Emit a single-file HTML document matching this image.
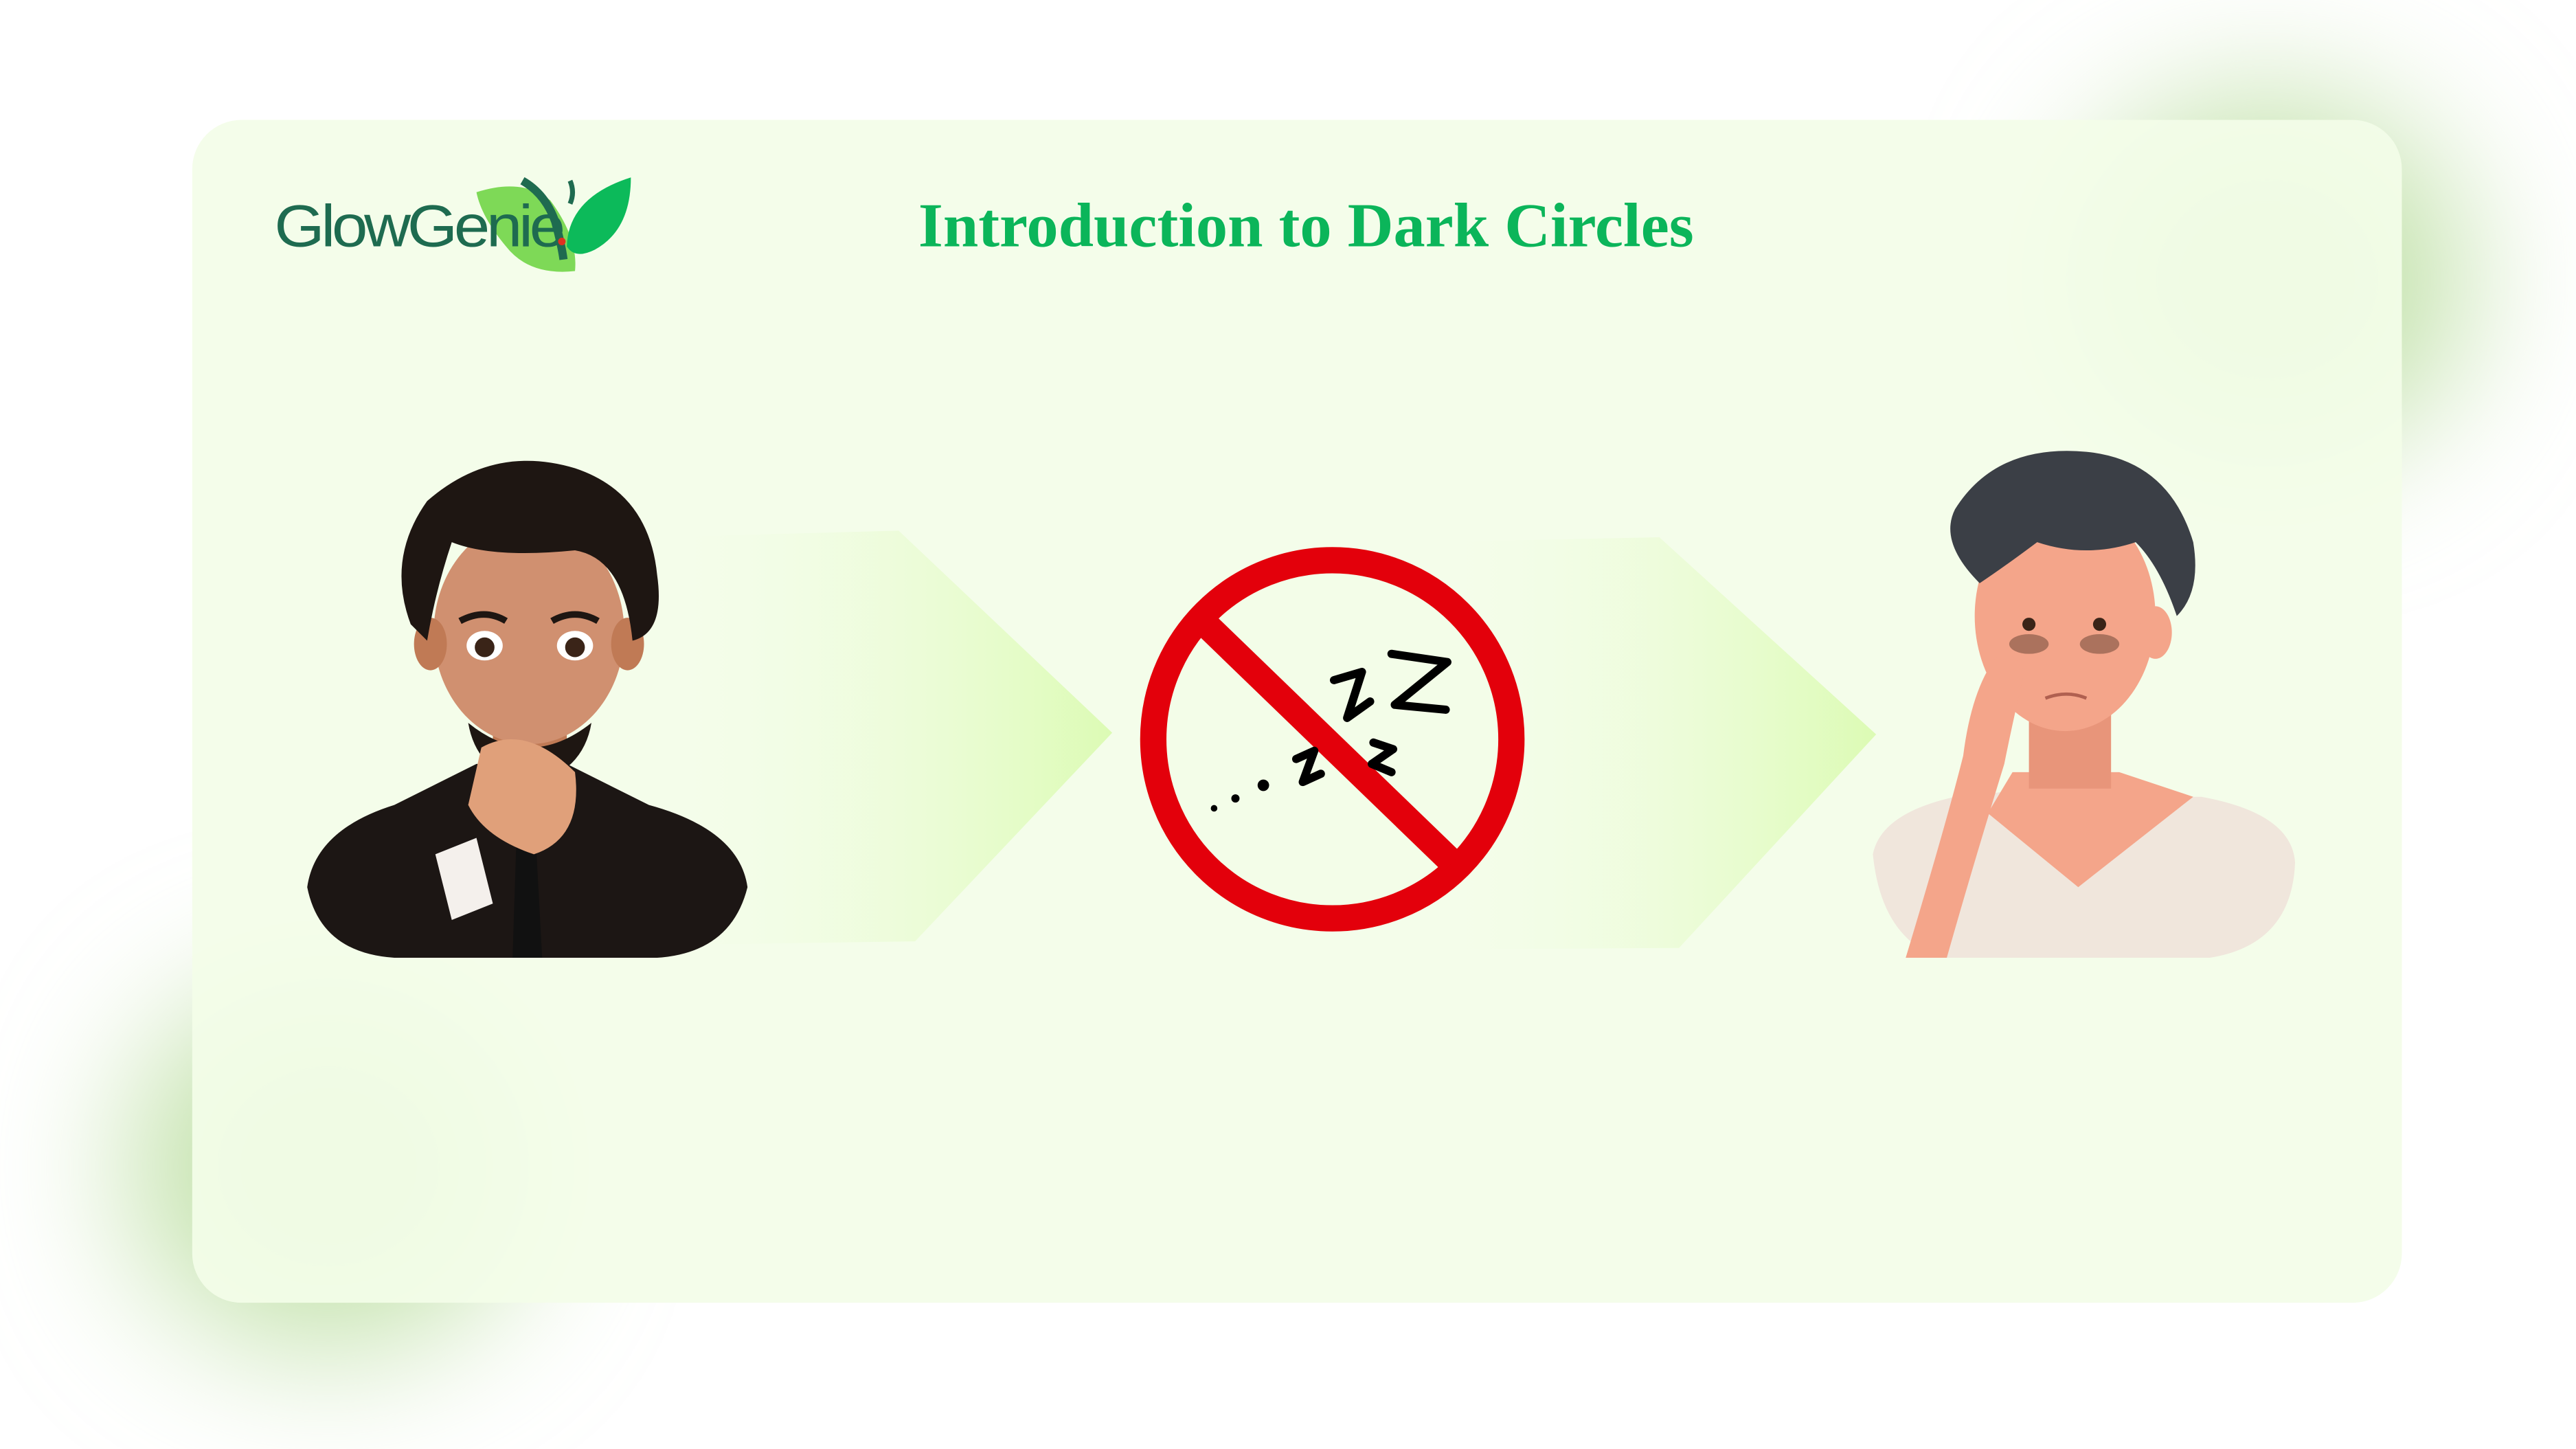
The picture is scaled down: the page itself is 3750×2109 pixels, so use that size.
<!DOCTYPE html>
<html><head><meta charset="utf-8"><style>
html,body{margin:0;padding:0;background:#fff;}
svg{display:block}
</style></head><body>
<svg width="3750" height="2109" viewBox="0 0 1568 882" preserveAspectRatio="none" xmlns="http://www.w3.org/2000/svg">
<defs>
<filter id="blur" x="-100%" y="-100%" width="300%" height="300%"><feGaussianBlur stdDeviation="45"/></filter>
<linearGradient id="ar" x1="0" x2="1" y1="0" y2="0">
<stop offset="0" stop-color="#f3fde8" stop-opacity="0"/>
<stop offset="1" stop-color="#dcfbb4"/>
</linearGradient>
</defs>
<rect width="1568" height="882" fill="#ffffff"/>
<ellipse cx="1380" cy="170" rx="120" ry="110" fill="#bfe0a6" filter="url(#blur)"/>
<ellipse cx="200" cy="710" rx="120" ry="110" fill="#bfe0a6" filter="url(#blur)"/>
<rect x="117" y="73" width="1345" height="720" rx="30" fill="#f3fde8" opacity="0.93"/>

<!-- logo -->
<path d="M290 117 Q318 108 335 122 Q352 145 350 165 Q322 168 308 150 Q293 132 290 117Z" fill="#7ed957"/>
<path d="M318 110 Q332 118 338 135 Q342 150 343 158" stroke="#1f6b50" stroke-width="5" fill="none"/>
<path d="M384 108 Q384 140 362 152 Q350 158 345 150 Q346 120 384 108Z" fill="#0cba5a"/>
<path d="M347 110 Q350 117 347 124" stroke="#1f6b50" stroke-width="3" fill="none"/>
<text x="167" y="150" font-family="Liberation Sans, sans-serif" font-size="36" fill="#1e6b50" textLength="175" lengthAdjust="spacingAndGlyphs" letter-spacing="-2">GlowGenie</text>
<circle cx="342" cy="147" r="2.3" fill="#e03020"/>

<text x="559" y="150" font-family="Liberation Serif, serif" font-weight="bold" font-size="38" fill="#0bb55a" textLength="472" lengthAdjust="spacingAndGlyphs">Introduction to Dark Circles</text>

<!-- arrows -->
<polygon points="400,327 547,323 677,446 557,573 420,575" fill="url(#ar)"/>
<polygon points="870,330 1010,327 1142,447 1022,577 880,578" fill="url(#ar)"/>

<!-- no sleep sign -->
<circle cx="811" cy="450" r="109" fill="#f3fde8" stroke="#e3000b" stroke-width="16"/>
<line x1="736" y1="382" x2="884" y2="525" stroke="#e3000b" stroke-width="16"/>
<g fill="none" stroke="#000" stroke-width="5" stroke-linecap="round" stroke-linejoin="round">
<path d="M847 398 L881 403 L849 429 L880 432"/>
<path d="M812 414 L829 409 L820 437 L834 427"/>
<path d="M789 462 L800 457 L793 476 L804 471"/>
<path d="M836 452 L848 456 L835 465 L847 470"/>
</g>
<circle cx="769" cy="478" r="3.5" fill="#000"/>
<circle cx="752" cy="486" r="2.5" fill="#000"/>
<circle cx="739" cy="492" r="2" fill="#000"/>

<!-- man 1 -->
<path d="M187 540 Q192 505 240 490 L290 465 L345 465 L395 490 Q450 505 455 540 Q445 580 400 583 L240 583 Q195 580 187 540Z" fill="#1c1614"/>
<path d="M292 470 L320 520 L350 470Z" fill="#f4f0ec"/>
<path d="M315 490 L325 490 L330 583 L312 583Z" fill="#111"/>
<rect x="300" y="420" width="45" height="55" fill="#c07a55"/>
<ellipse cx="322" cy="385" rx="58" ry="68" fill="#d09070"/>
<ellipse cx="262" cy="392" rx="10" ry="16" fill="#c07a55"/>
<ellipse cx="382" cy="392" rx="10" ry="16" fill="#c07a55"/>
<path d="M250 380 Q235 340 260 305 Q300 270 350 285 Q395 300 400 350 Q405 385 385 390 Q380 340 350 335 Q300 340 275 330 Q265 360 260 390Z" fill="#1e1612"/>
<path d="M285 440 Q322 470 360 440 Q355 470 322 478 Q290 470 285 440Z" fill="#1e1612"/>
<ellipse cx="295" cy="393" rx="11" ry="9" fill="#fff"/><circle cx="295" cy="394" r="6" fill="#3a2418"/>
<ellipse cx="350" cy="393" rx="11" ry="9" fill="#fff"/><circle cx="350" cy="394" r="6" fill="#3a2418"/>
<path d="M280 378 Q295 370 308 378 M336 378 Q350 370 364 378" stroke="#1e1612" stroke-width="4" fill="none"/>
<path d="M293 455 Q320 440 350 470 Q355 510 325 520 Q295 510 285 490Z" fill="#e0a07a"/>
<path d="M265 520 L290 510 L300 550 L275 560Z" fill="#f4f0ec"/>

<!-- man 2 -->
<path d="M1140 520 Q1145 495 1190 485 L1240 480 L1290 485 L1340 485 Q1395 495 1397 525 Q1395 575 1345 583 L1180 583 Q1145 570 1140 520Z" fill="#f0e6dc"/>
<path d="M1225 470 L1290 470 L1335 485 L1265 540 L1210 495Z" fill="#f4a58a"/>
<rect x="1235" y="420" width="50" height="60" fill="#e8957a"/>
<ellipse cx="1257" cy="375" rx="55" ry="70" fill="#f4a58a"/>
<ellipse cx="1312" cy="385" rx="10" ry="16" fill="#f4a58a"/>
<ellipse cx="1235" cy="392" rx="12" ry="6" fill="#7a5040" opacity="0.6"/>
<ellipse cx="1278" cy="392" rx="12" ry="6" fill="#7a5040" opacity="0.6"/>
<circle cx="1235" cy="380" r="4" fill="#3a2418"/><circle cx="1278" cy="380" r="4" fill="#3a2418"/>
<path d="M1205 355 Q1180 330 1190 310 Q1215 270 1270 275 Q1320 280 1335 330 Q1340 360 1325 375 Q1315 345 1300 330 Q1270 340 1240 330 Q1220 345 1205 355Z" fill="#3b3f46"/>
<path d="M1245 425 Q1258 420 1270 425" stroke="#b06050" stroke-width="2" fill="none"/>
<path d="M1160 583 Q1185 500 1195 460 Q1200 420 1215 400 Q1228 395 1232 410 Q1225 440 1220 465 Q1200 530 1185 583Z" fill="#f4a58a"/>
</svg>
</body></html>
